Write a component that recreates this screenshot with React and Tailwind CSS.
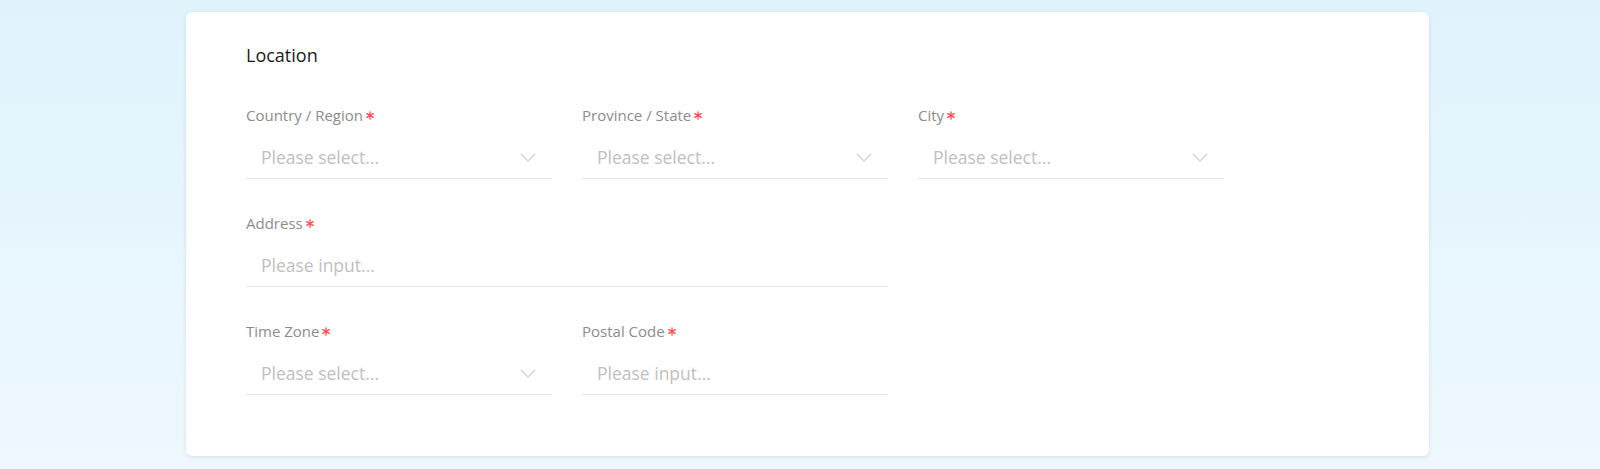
import React from "react";

const Asterisk = () => (
  <svg width="8" height="9" viewBox="0 0 8 9" className="ml-[3px] mt-[1px]">
    <g stroke="#ff4d4f" strokeWidth="1.3" strokeLinecap="round">
      <line x1="4" y1="0.8" x2="4" y2="8.2" />
      <line x1="0.8" y1="2.6" x2="7.2" y2="6.4" />
      <line x1="0.8" y1="6.4" x2="7.2" y2="2.6" />
    </g>
  </svg>
);

const Chevron = () => (
  <svg width="16" height="9" viewBox="0 0 16 9" fill="none">
    <path d="M1 1l7 7 7-7" stroke="#d0d0d0" strokeWidth="1.2" />
  </svg>
);

const Field = ({ label, placeholder, select, className = "" }) => (
  <div className={className}>
    <div className="flex items-center h-5 text-[15px] leading-5 text-[#8c8c8c]">
      {label}
      <Asterisk />
    </div>
    <div className="mt-3 h-[42px] flex items-center justify-between border-b border-[#e6e6e6] pl-[15px] pr-[16px]">
      <span className="text-[17.5px] text-[#bfbfbf]">{placeholder}</span>
      {select && <Chevron />}
    </div>
  </div>
);

export default function App() {
  return (
    <div
      className="min-h-[469px] w-full bg-gradient-to-b from-[#e0f3fd] to-[#eef8fe] pt-3"
      style={{ fontFamily: '"Open Sans", "Noto Sans", sans-serif' }}
    >
      <div className="ml-[186px] w-[1243px] h-[444px] bg-white rounded-md shadow-[0_1px_4px_rgba(0,40,80,0.12)] pt-[31px] pl-[60px]">
        <h2 className="text-[18px] leading-6 text-[#1a1a1a]">Location</h2>
        <div className="mt-[38px] grid grid-cols-[306px_306px_306px] gap-x-[30px] gap-y-[34px]">
          <Field label="Country / Region" placeholder="Please select..." select />
          <Field label="Province / State" placeholder="Please select..." select />
          <Field label="City" placeholder="Please select..." select />
          <Field label="Address" placeholder="Please input..." className="col-span-2" />
          <div />
          <Field label="Time Zone" placeholder="Please select..." select />
          <Field label="Postal Code" placeholder="Please input..." />
        </div>
      </div>
    </div>
  );
}
